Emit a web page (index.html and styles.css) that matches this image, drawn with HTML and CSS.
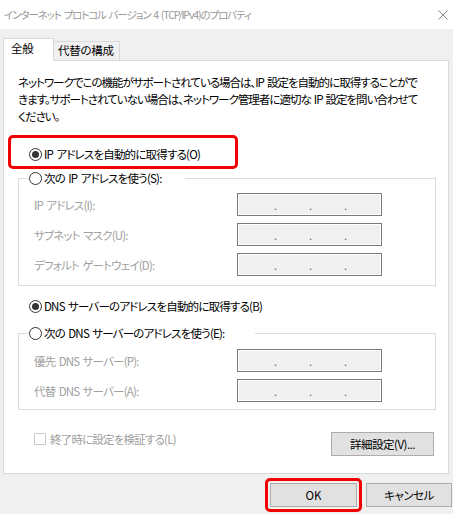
FILE: index.html
```html
<!DOCTYPE html>
<html lang="ja">
<head>
<meta charset="utf-8">
<title>IPv4 プロパティ</title>
<link rel="stylesheet" href="styles.css">
</head>
<body>
<div class="titlebar">
  <span class="title">インターネット プロトコル バージョン 4 (TCP/IPv4)のプロパティ</span>
  <svg class="close" width="10" height="10" viewBox="0 0 10 10"><path d="M0.5 0.5L9.5 9.5M9.5 0.5L0.5 9.5" stroke="#8a8a8a" stroke-width="1" fill="none"/></svg>
</div>
<div class="tabs">
  <div class="tab tab-active">全般</div>
  <div class="tab tab-inactive">代替の構成</div>
</div>
<div class="panel">
  <p class="desc">ネットワークでこの機能がサポートされている場合は、IP 設定を自動的に取得することがで<br>きます。サポートされていない場合は、ネットワーク管理者に適切な IP 設定を問い合わせて<br>ください。</p>
  <div class="radio-row row-ip-auto"><span class="radio checked"></span><span>IP アドレスを自動的に取得する(O)</span><span class="redbox redbox-radio"></span></div>
  <fieldset class="group group-ip">
    <legend class="legend legend-ip"><span class="radio"></span><span>次の IP アドレスを使う(S):</span></legend>
    <div class="field-row"><span class="field-label">IP アドレス(I):</span><div class="ipbox"><span>.</span><span>.</span><span>.</span></div></div>
    <div class="field-row"><span class="field-label">サブネット マスク(U):</span><div class="ipbox"><span>.</span><span>.</span><span>.</span></div></div>
    <div class="field-row"><span class="field-label">デフォルト ゲートウェイ(D):</span><div class="ipbox"><span>.</span><span>.</span><span>.</span></div></div>
  </fieldset>
  <div class="radio-row row-dns-auto"><span class="radio checked"></span><span>DNS サーバーのアドレスを自動的に取得する(B)</span></div>
  <fieldset class="group group-dns">
    <legend class="legend legend-dns"><span class="radio"></span><span>次の DNS サーバーのアドレスを使う(E):</span></legend>
    <div class="field-row"><span class="field-label">優先 DNS サーバー(P):</span><div class="ipbox"><span>.</span><span>.</span><span>.</span></div></div>
    <div class="field-row"><span class="field-label">代替 DNS サーバー(A):</span><div class="ipbox"><span>.</span><span>.</span><span>.</span></div></div>
  </fieldset>
  <div class="bottom-row">
    <div class="check-row"><span class="checkbox"></span><span>終了時に設定を検証する(L)</span></div>
    <button class="btn btn-advanced">詳細設定(V)...</button>
  </div>
</div>
<div class="footer">
  <div class="btn-wrap"><button class="btn btn-ok">OK</button><span class="redbox redbox-ok"></span></div>
  <button class="btn btn-cancel">キャンセル</button>
</div>
</body>
</html>
```
FILE: styles.css
```css
* { box-sizing: border-box; }
body {
  margin: 0;
  width: 453px;
  height: 514px;
  overflow: hidden;
  background: #f0f0f0;
  font-family: "Noto Sans CJK JP", "Noto Sans", sans-serif;
  font-size: 11.5px;
  letter-spacing: -0.8px;
  word-spacing: 1.5px;
  font-feature-settings: "palt";
  color: #000;
}
.titlebar {
  height: 29px;
  background: #fff;
  display: flex;
  align-items: center;
  justify-content: space-between;
  padding: 0 5px 0 4px;
}
.title {
  color: #999;
  white-space: nowrap;
  font-size: 10.5px;
  letter-spacing: -1.1px;
  word-spacing: 1.5px;
}
.close { display: block; }

.tabs {
  display: flex;
  align-items: flex-end;
  margin: 9px 0 0 3px;
}
.tab {
  border: 1px solid #d9d9d9;
  border-bottom: none;
  white-space: nowrap;
  letter-spacing: -0.3px;
}
.tab-active {
  width: 51px;
  height: 23px;
  margin-bottom: -1px;
  background: #fff;
  position: relative;
  z-index: 1;
  padding-left: 7px;
  line-height: 19px;
}
.tab-inactive {
  width: 66px;
  height: 19px;
  border-left: none;
  padding-left: 4px;
  line-height: 17px;
}

.panel {
  width: 446px;
  height: 414px;
  margin-left: 3px;
  background: #fff;
  border: 1px solid #d9d9d9;
  padding: 13px 12px 0 14px;
}
.desc {
  margin: 0;
  line-height: 17px;
  white-space: nowrap;
  letter-spacing: -1px;
}
.radio-row {
  display: flex;
  align-items: center;
  height: 20px;
  width: max-content;
  margin-left: 11px;
  white-space: nowrap;
  position: relative;
}
.row-ip-auto { margin-top: 19px; }
.row-dns-auto { margin-top: 10px; }
.radio {
  flex: none;
  width: 13px;
  height: 13px;
  border: 1px solid #333;
  border-radius: 50%;
  display: inline-flex;
  align-items: center;
  justify-content: center;
  margin-right: 2px;
  background: #fff;
}
.radio.checked::after {
  content: "";
  width: 7px;
  height: 7px;
  border-radius: 50%;
  background: #333;
}
.redbox {
  position: absolute;
  border: 3px solid #f20000;
  border-radius: 5px;
  pointer-events: none;
}
.redbox-radio { left: -21px; top: -9px; width: 230px; height: 34px; }

.group {
  width: 418px;
  min-width: 0;
  margin: 0;
  border: 1px solid #dcdcdc;
  padding: 5px 0 9px 15px;
  display: flex;
  flex-direction: column;
  gap: 7px;
}
.group-ip { margin-top: 4px; }
.group-dns { margin-top: 7px; padding-top: 6px; padding-bottom: 7px; }
.legend {
  padding: 0;
  margin-left: -5px;
  height: 20px;
  display: flex;
  align-items: center;
  white-space: nowrap;
}
.legend-ip { width: 156px; }
.legend-dns { width: 226px; }
.field-row {
  display: flex;
  align-items: center;
  height: 23px;
}
.field-label {
  width: 203px;
  color: #a0a0a0;
  white-space: nowrap;
}
.ipbox {
  width: 145px;
  height: 23px;
  border: 1px solid #7a7a7a;
  box-shadow: inset 0 0 0 1px #fff;
  background: #f0f0f0;
  display: flex;
  padding-left: 20px;
  line-height: 22px;
  font-size: 11px;
  letter-spacing: 0;
  color: #6d6d6d;
}
.ipbox span { width: 35px; text-align: center; }

.bottom-row {
  display: flex;
  justify-content: space-between;
  align-items: flex-start;
  margin-top: 22px;
  padding-right: 2px;
}
.check-row {
  display: flex;
  align-items: center;
  height: 14px;
  margin-left: 16px;
  color: #a0a0a0;
  white-space: nowrap;
}
.checkbox {
  width: 12px;
  height: 12px;
  border: 1px solid #cccccc;
  background: #fff;
  margin-right: 4px;
}
.btn {
  font-family: inherit;
  font-size: 11.5px;
  letter-spacing: -0.5px;
  font-feature-settings: "palt";
  color: #000;
  background: #e1e1e1;
  border: 1px solid #adadad;
  border-radius: 0;
  height: 24px;
  padding: 0;
  margin: 0;
  white-space: nowrap;
}
.btn-advanced { width: 103px; }

.footer {
  display: flex;
  justify-content: flex-end;
  gap: 9px;
  margin-top: 9px;
  padding-right: 1px;
}
.btn-wrap { position: relative; display: flex; }
.btn-ok { width: 87px; letter-spacing: 0; }
.btn-cancel { width: 86px; }
.redbox-ok { left: -5px; top: -5px; right: -5px; bottom: -5px; }
```
